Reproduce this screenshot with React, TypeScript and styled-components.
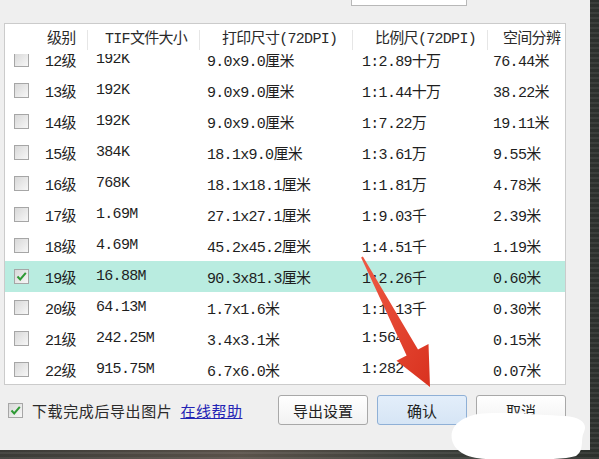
import React, { useEffect, useRef } from "react";
import styled, { createGlobalStyle } from "styled-components";

const GlobalStyle = createGlobalStyle`
  html, body {
    margin: 0;
    padding: 0;
    background: #2e322f;
  }
  body {
    font-family: "Noto Sans CJK SC", sans-serif;
  }
`;

const Screen = styled.div`
  position: relative;
  width: 599px;
  height: 459px;
  overflow: hidden;
  background:
    repeating-linear-gradient(0deg, rgba(255, 255, 255, 0.07) 0 2px, transparent 2px 5px),
    linear-gradient(90deg, #3a3a36, #5a524a 40%, #3c3f3a 70%, #2c302c);
`;

const Dialog = styled.div`
  width: 590px;
  height: 450px;
  box-sizing: border-box;
  background: #efefef;
  padding: 0 24px 0 4px;
  display: flex;
  flex-direction: column;
`;

const TopBar = styled.div`
  height: 23px;
  display: flex;
  padding-left: 347px;
`;

const SearchBox = styled.div`
  width: 114px;
  height: 5px;
  background: #fff;
  border: 1px solid #b8b8b8;
  border-top: none;
`;

const ListPanel = styled.div`
  width: 562px;
  height: 362px;
  box-sizing: border-box;
  border: 1px solid #cbcbcb;
  background: #fff;
  display: flex;
  flex-direction: column;
  overflow: hidden;
`;

const Header = styled.div`
  height: 30px;
  flex: none;
  display: grid;
  grid-template-columns: 83px 112px 153px 135px 1fr;
  align-items: center;
  font-family: "Liberation Mono", "Noto Sans CJK SC", monospace;
  font-size: 15px;
  letter-spacing: -0.7px;
  color: #2a2a2a;
`;

const HeaderCell = styled.div<{ $indent: number }>`
  padding-left: ${(p) => p.$indent}px;
  white-space: nowrap;
  line-height: 31px;
  background: linear-gradient(#e6e6e6, #e6e6e6) right center / 1px 20px no-repeat;
  &:last-child {
    background: none;
  }
`;

const Body = styled.div`
  height: 330px;
  overflow: hidden;
`;

const Row = styled.div<{ $selected?: boolean }>`
  height: 31px;
  display: grid;
  grid-template-columns: 40px 51px 111px 155px 131px 1fr;
  align-items: center;
  background: ${(p) => (p.$selected ? "#b9ece0" : "#fff")};
  font-family: "Liberation Mono", "Noto Sans CJK SC", monospace;
  font-size: 15px;
  letter-spacing: -0.7px;
  color: #1e1e1e;
`;

const Cell = styled.div`
  white-space: nowrap;
  overflow: hidden;
`;

const BoxCell = styled.div`
  padding-left: 9px;
  display: flex;
  align-items: center;
`;

const Check = styled.span`
  width: 15px;
  height: 15px;
  box-sizing: border-box;
  border: 1px solid #a6a6a6;
  background: linear-gradient(135deg, #d8d8d8, #f7f7f7);
  display: inline-flex;
  align-items: center;
  justify-content: center;
  flex: none;
`;

const Footer = styled.div`
  display: flex;
  align-items: center;
  height: 30px;
  margin-top: 10px;
  padding-left: 4px;
`;

const Label = styled.span`
  margin-left: 9px;
  font-size: 15px;
  letter-spacing: 0.6px;
  color: #2b2b2b;
`;

const HelpLink = styled.a`
  margin-left: 8px;
  font-size: 15px;
  letter-spacing: 0.5px;
  color: #2323b4;
  text-decoration: underline;
  cursor: pointer;
`;

const Buttons = styled.div`
  margin-left: auto;
  display: flex;
  gap: 9px;
`;

const Button = styled.button<{ $primary?: boolean }>`
  width: 90px;
  height: 30px;
  box-sizing: border-box;
  border-radius: 3px;
  border: 1px solid ${(p) => (p.$primary ? "#8fb0d6" : "#a8a8a8")};
  background: ${(p) =>
    p.$primary ? "linear-gradient(#e3eefa, #d6e5f5)" : "linear-gradient(#ffffff, #f2f2f2)"};
  font-family: "Noto Sans CJK SC", sans-serif;
  font-size: 15px;
  color: #222;
  padding: 0;
`;

const Overlay = styled.svg`
  position: absolute;
  top: 0;
  left: 0;
  pointer-events: none;
`;

const rows = [
  ["12级", "192K", "9.0x9.0厘米", "1:2.89十万", "76.44米"],
  ["13级", "192K", "9.0x9.0厘米", "1:1.44十万", "38.22米"],
  ["14级", "192K", "9.0x9.0厘米", "1:7.22万", "19.11米"],
  ["15级", "384K", "18.1x9.0厘米", "1:3.61万", "9.55米"],
  ["16级", "768K", "18.1x18.1厘米", "1:1.81万", "4.78米"],
  ["17级", "1.69M", "27.1x27.1厘米", "1:9.03千", "2.39米"],
  ["18级", "4.69M", "45.2x45.2厘米", "1:4.51千", "1.19米"],
  ["19级", "16.88M", "90.3x81.3厘米", "1:2.26千", "0.60米"],
  ["20级", "64.13M", "1.7x1.6米", "1:1.13千", "0.30米"],
  ["21级", "242.25M", "3.4x3.1米", "1:564", "0.15米"],
  ["22级", "915.75M", "6.7x6.0米", "1:282", "0.07米"],
];

const headers: [string, number][] = [
  ["级别", 42],
  ["TIF文件大小", 17],
  ["打印尺寸(72DPI)", 22],
  ["比例尺(72DPI)", 22],
  ["空间分辨", 15],
];

const CheckBox: React.FC<{ checked?: boolean }> = ({ checked }) => (
  <Check>
    {checked && (
      <svg width="13" height="13" viewBox="0 0 13 13">
        <path d="M2.5 6.5 L5.2 9.5 L10.8 2.8" fill="none" stroke="#2f9a35" strokeWidth="2" />
      </svg>
    )}
  </Check>
);

export default function App() {
  const bodyRef = useRef<HTMLDivElement>(null);

  // the list is scrolled a little, so row 12 sits half under the header
  useEffect(() => {
    if (bodyRef.current) bodyRef.current.scrollTop = 10;
  }, []);

  return (
    <Screen>
      <GlobalStyle />
      <Dialog>
        <TopBar>
          <SearchBox />
        </TopBar>
        <ListPanel>
          <Header>
            {headers.map(([title, indent]) => (
              <HeaderCell key={title} $indent={indent}>
                {title}
              </HeaderCell>
            ))}
          </Header>
          <Body ref={bodyRef}>
            {rows.map((r) => {
              const selected = r[0] === "19级";
              return (
                <Row key={r[0]} $selected={selected}>
                  <BoxCell>
                    <CheckBox checked={selected} />
                  </BoxCell>
                  {r.map((v, i) => (
                    <Cell key={i}>{v}</Cell>
                  ))}
                </Row>
              );
            })}
          </Body>
        </ListPanel>
        <Footer>
          <CheckBox checked />
          <Label>下载完成后导出图片</Label>
          <HelpLink>在线帮助</HelpLink>
          <Buttons>
            <Button>导出设置</Button>
            <Button $primary>确认</Button>
            <Button>取消</Button>
          </Buttons>
        </Footer>
      </Dialog>
      <Overlay width="599" height="459" viewBox="0 0 599 459">
        <defs>
          <linearGradient id="arrowFill" x1="0" y1="0" x2="1" y2="1">
            <stop offset="0" stopColor="#ee5a44" />
            <stop offset="1" stopColor="#d9321f" />
          </linearGradient>
        </defs>
        <polygon
          points="362.9,256.5 418,349.4 428.5,344 430,387 396.5,360.8 406.6,355.4 361.1,257.5"
          fill="url(#arrowFill)"
        />
        <path
          d="M452 440 C449 426 462 417 478 414 C500 411 540 415 565 416 C580 417 588 423 584 432 C580 440 585 450 576 456 C560 461 520 459 490 459 C468 459 455 452 452 440 Z"
          fill="#ffffff"
        />
      </Overlay>
    </Screen>
  );
}
